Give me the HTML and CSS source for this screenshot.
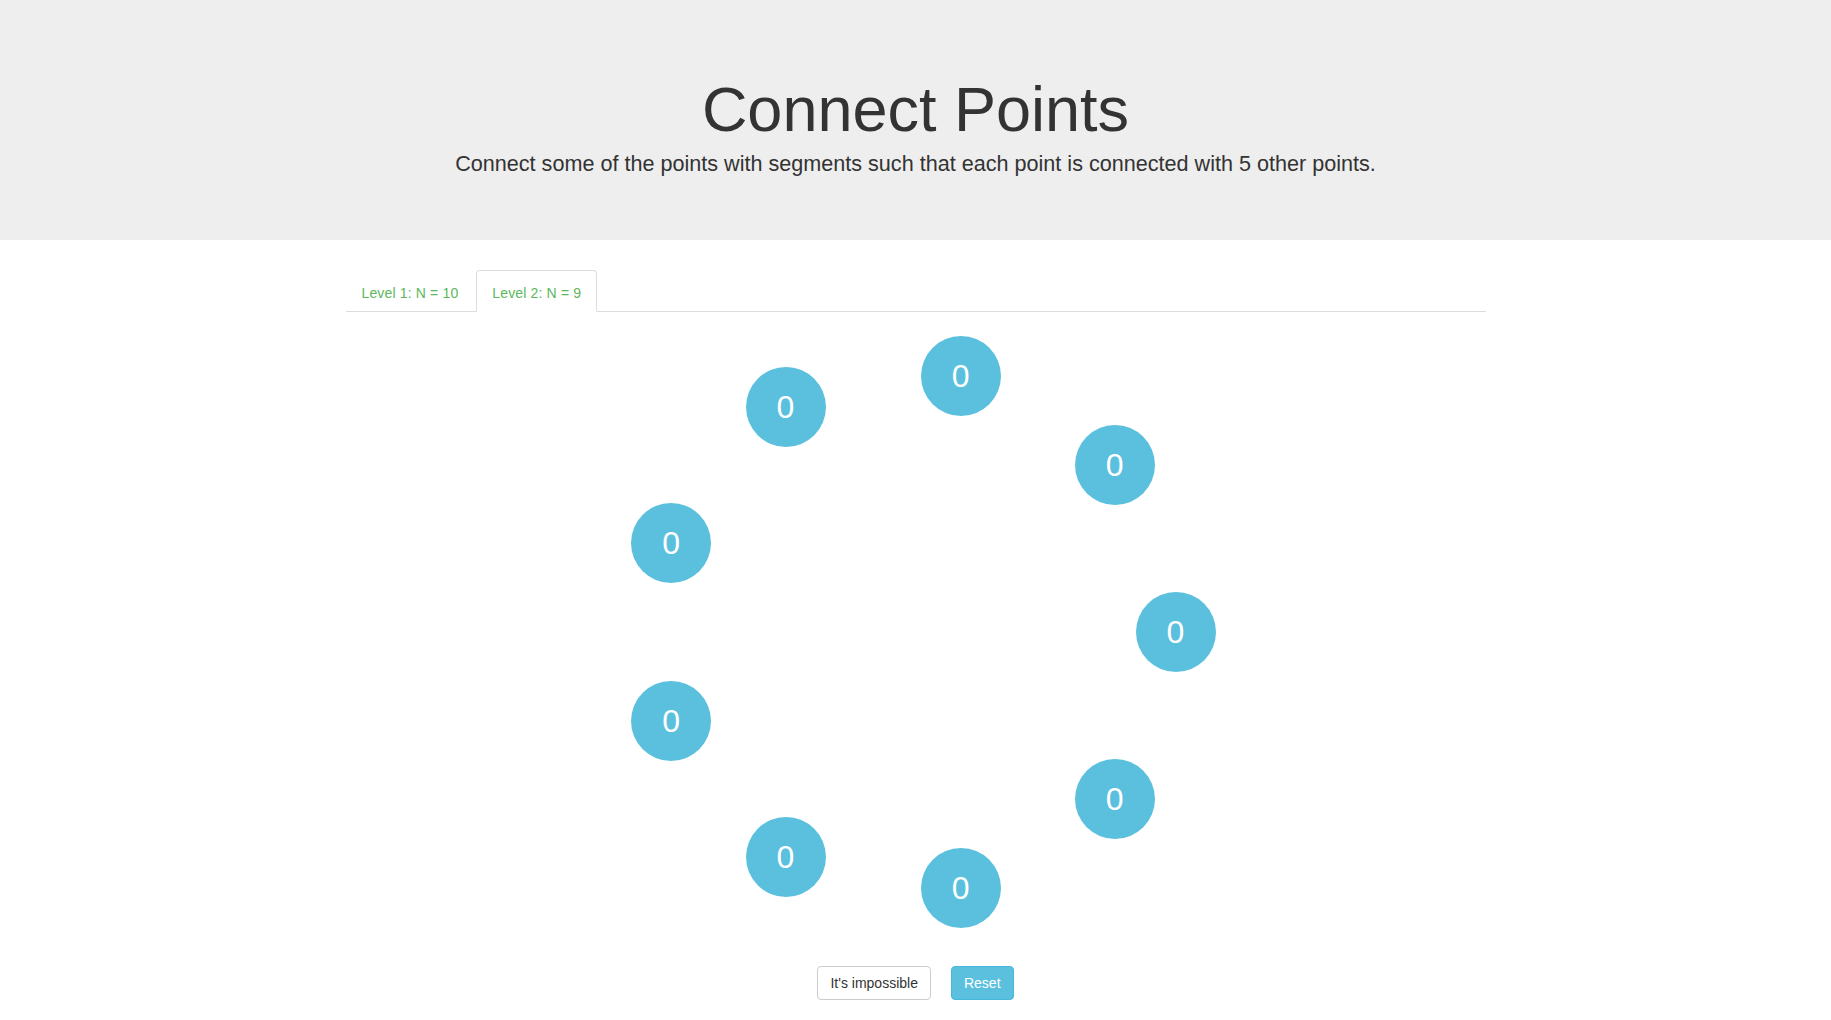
FILE: index.html
```html
<!DOCTYPE html>
<html lang="en">
<head>
<meta charset="utf-8">
<title>Connect Points</title>
<link rel="stylesheet" href="styles.css">
</head>
<body>
<header class="jumbotron">
  <div class="container centered">
    <h1 class="title">Connect Points</h1>
    <p class="lead">Connect some of the points with segments such that each point is connected with 5 other points.</p>
  </div>
</header>
<main class="container">
  <ul class="nav-tabs">
    <li class="tab"><a class="tab-link" href="#">Level 1: N = 10</a></li>
    <li class="tab active"><a class="tab-link" href="#">Level 2: N = 9</a></li>
  </ul>
  <div class="board">
    <div class="point" style="left:790px;top:280px">0</div>
    <div class="point" style="left:729.2px;top:112.9px">0</div>
    <div class="point" style="left:575.1px;top:24px">0</div>
    <div class="point" style="left:400px;top:54.8px">0</div>
    <div class="point" style="left:285.7px;top:191.1px">0</div>
    <div class="point" style="left:285.7px;top:368.9px">0</div>
    <div class="point" style="left:400px;top:505.2px">0</div>
    <div class="point" style="left:575.1px;top:536px">0</div>
    <div class="point" style="left:729.2px;top:447.1px">0</div>
  </div>
  <div class="actions">
    <button class="btn btn-default" type="button">It's impossible</button>
    <button class="btn btn-info" type="button">Reset</button>
  </div>
</main>
</body>
</html>
```
FILE: styles.css
```css
html, body {
  margin: 0;
  padding: 0;
}
body {
  font-family: "Liberation Sans", Arial, Helvetica, sans-serif;
  font-size: 14px;
  line-height: 1.42857143;
  color: #333;
  background: #fff;
}
.container {
  width: 1140px;
  margin: 0 auto;
  padding: 0 15px;
}
.centered {
  text-align: center;
}
.jumbotron {
  background: #eee;
  padding: 48px 0;
  margin-bottom: 30px;
}
.title {
  font-size: 63px;
  font-weight: 400;
  line-height: 69.3px;
  margin: 26.5px 0 5.25px;
  color: #333;
}
.lead {
  font-size: 21.6px;
  font-weight: 400;
  line-height: 30px;
  margin: 0 0 13.25px;
}
.nav-tabs {
  list-style: none;
  margin: 0;
  padding: 0;
  display: flex;
  border-bottom: 1px solid #ddd;
}
.tab {
  margin-bottom: -1px;
}
.tab-link {
  display: block;
  padding: 12px 15px 8px;
  margin-right: 2px;
  line-height: 20px;
  letter-spacing: 0.15px;
  border: 1px solid transparent;
  border-radius: 4px 4px 0 0;
  color: #5cb85c;
  text-decoration: none;
}
.tab.active .tab-link {
  border-color: #ddd;
  border-bottom-color: transparent;
  background: #fff;
}
.board {
  position: relative;
  height: 640px;
}
.point {
  position: absolute;
  width: 80px;
  height: 80px;
  border-radius: 50%;
  background: #5bc0de;
  color: #fff;
  font-size: 32px;
  display: flex;
  align-items: center;
  justify-content: center;
  line-height: 1;
}
.actions {
  display: flex;
  justify-content: center;
  gap: 20px;
  margin-top: 14px;
}
.btn {
  font-family: "Liberation Sans", Arial, Helvetica, sans-serif;
  font-size: 14px;
  line-height: 20px;
  padding: 6px 12px;
  border: 1px solid #ccc;
  border-radius: 4px;
  background: #fff;
  color: #333;
  cursor: pointer;
}
.btn-info {
  background: #5bc0de;
  border-color: #46b8da;
  color: #fff;
}
```
